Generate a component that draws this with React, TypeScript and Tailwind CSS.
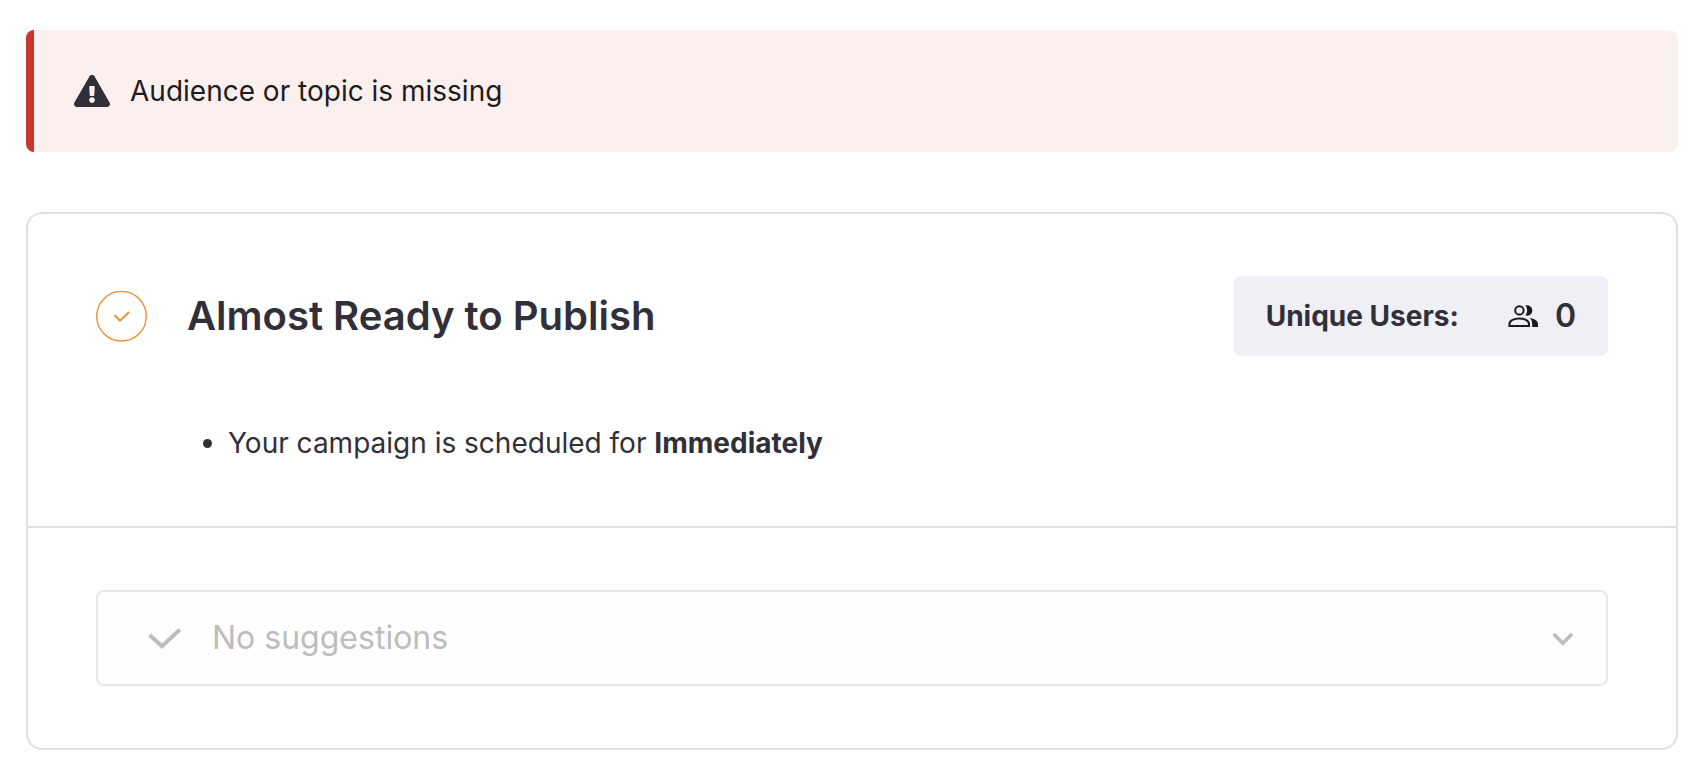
import React from "react";
import { FaExclamationTriangle } from "react-icons/fa";

function StatusIcon() {
  return (
    <svg width="51" height="52" viewBox="0 0 51 52" fill="none" stroke="#ef8f35" aria-hidden="true">
      <circle cx="25.5" cy="26.2" r="24.8" strokeWidth="1.4" />
      <path d="M18.6 25.2 L24 30.6 L33 22" strokeWidth="2" />
    </svg>
  );
}

function PeopleIcon() {
  return (
    <svg width="32" height="32" viewBox="0 0 32 32" fill="none" className="text-[#1b1a20]" aria-hidden="true">
      <circle cx="12.4" cy="10.4" r="4.2" stroke="currentColor" strokeWidth="2" />
      <path d="M2.4 26 V24.2 C2.4 20.4 7.6 18.4 12.2 18.4 S22 20.4 22 24.2 V26 Z" stroke="currentColor" strokeWidth="2" />
      <path d="M18.4 5.5 A5.2 5.2 0 1 1 18.4 15.3 C20.8 12.3 20.8 8.5 18.4 5.5 Z" fill="currentColor" />
      <path d="M22.8 18 C27 18.7 31 20.7 31 24 V27 H25.2 V24 C25.2 21.4 24.4 19.6 22.8 18 Z" fill="currentColor" />
    </svg>
  );
}

function CheckIcon() {
  return (
    <svg width="34" height="24" viewBox="0 0 34 24" fill="none" stroke="#bdbdbd" strokeWidth="4" aria-hidden="true">
      <path d="M1.6 9 L14 20.3 L31.8 3.6" />
    </svg>
  );
}

function ChevronIcon() {
  return (
    <svg width="22" height="16" viewBox="0 0 22 16" fill="none" stroke="#bdbdbd" strokeWidth="3.6" aria-hidden="true">
      <path d="M1.6 4 L10.8 13.2 L20 4" />
    </svg>
  );
}

function Alert({ children }: { children: React.ReactNode }) {
  return (
    <div role="alert" className="flex items-center gap-5 rounded-lg border-l-8 border-[#cc352d] bg-[#fcf0ee] px-10 py-10">
      <FaExclamationTriangle className="h-8 w-9 text-[#313038]" aria-hidden="true" />
      <p className="text-[28px] leading-[42px] text-[#1d1c22]">{children}</p>
    </div>
  );
}

function UniqueUsers({ count }: { count: number }) {
  return (
    <div className="flex h-20 items-center rounded-lg bg-[#f0eff6] px-8">
      <span className="text-[28px] font-bold">Unique Users:</span>
      <span className="ml-12">
        <PeopleIcon />
      </span>
      <span className="ml-4 text-[32px] font-semibold">{count}</span>
    </div>
  );
}

export default function App() {
  return (
    <main className="flex flex-col gap-15 bg-white pt-7.5 pr-6 pb-4 pl-6.5 font-['Inter',sans-serif] text-[#313038]">
      <Alert>Audience or topic is missing</Alert>
      <section className="rounded-2xl border-2 border-[#e1e0e9] bg-white">
        <div className="px-17 pt-15.5 pb-16">
          <header className="flex items-center justify-between">
            <div className="flex items-center gap-10">
              <StatusIcon />
              <h1 className="text-[40px] leading-12 font-semibold">Almost Ready to Publish</h1>
            </div>
            <UniqueUsers count={0} />
          </header>
          <ul className="mt-17 list-disc pl-33 text-[28px] leading-[38px]">
            <li>
              Your campaign is scheduled for <strong className="font-bold">Immediately</strong>
            </li>
          </ul>
        </div>
        <div className="border-t-2 border-[#e1e0e9] px-17 py-15.5">
          <button
            type="button"
            disabled
            className="flex h-24 w-full items-center rounded-lg border-2 border-[#e8e8e8] bg-[#fefefe] pr-8 pl-12.5 text-[32px] text-[#bdbdbd]"
          >
            <CheckIcon />
            <span className="ml-7.5">No suggestions</span>
            <span className="ml-auto">
              <ChevronIcon />
            </span>
          </button>
        </div>
      </section>
    </main>
  );
}
